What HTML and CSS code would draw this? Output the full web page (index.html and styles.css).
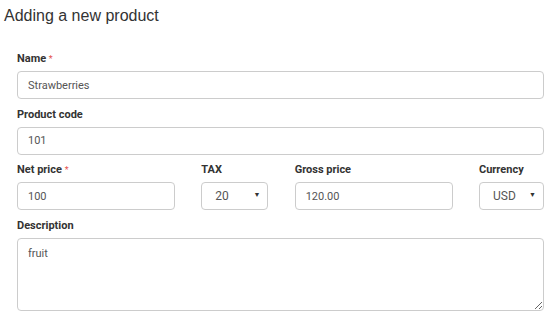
FILE: index.html
```html
<!DOCTYPE html>
<html lang="en">

<head>
    <meta charset="UTF-8">
    <meta name="viewport" content="width=device-width, initial-scale=1.0">
    <title>Adding a new product</title>
    <link rel="stylesheet" href="styles.css">
</head>

<body>
    <h1 class="page-title">Adding a new product</h1>
    <form class="product-form" id="productForm">
        <div class="field">
            <label for="name">Name <span class="req">*</span></label>
            <input type="text" id="name" value="Strawberries">
        </div>
        <div class="field">
            <label for="code">Product code</label>
            <input type="text" id="code" value="101">
        </div>
        <div class="price-row">
            <div class="field">
                <label for="netPrice">Net price <span class="req">*</span></label>
                <input type="text" id="netPrice" value="100">
            </div>
            <div class="field">
                <label for="tax">TAX</label>
                <div class="select-wrap">
                    <select id="tax">
                        <option>20</option>
                        <option>10</option>
                        <option>0</option>
                    </select>
                </div>
            </div>
            <div class="field">
                <label for="grossPrice">Gross price</label>
                <input type="text" id="grossPrice" value="120.00">
            </div>
            <div class="field">
                <label for="currency">Currency</label>
                <div class="select-wrap">
                    <select id="currency">
                        <option>USD</option>
                        <option>EUR</option>
                    </select>
                </div>
            </div>
        </div>
        <div class="field">
            <label for="description">Description</label>
            <textarea id="description">fruit</textarea>
        </div>
    </form>
</body>

</html>
```

FILE: styles.css
```css
:root {
    --text-color: #333;
    --field-text: #555;
    --input-border: #ccc;
    --req-color: #e4514d;
}

body {
    font-family: "Liberation Sans", Arial, sans-serif;
    margin: 0;
    background-color: #fff;
    color: var(--text-color);
}

.page-title {
    font-size: 16px;
    font-weight: normal;
    line-height: 18px;
    margin: 0;
    padding: 7px 0 0 4px;
}

.product-form {
    margin-top: 27px;
    padding: 0 6px 0 17px;
    font-family: Roboto, "Liberation Sans", sans-serif;
}

.field {
    margin-bottom: 8.5px;
}

label {
    display: block;
    font-size: 11px;
    font-weight: bold;
    line-height: 14px;
    margin-bottom: 5px;
}

.req {
    color: var(--req-color);
    font-weight: normal;
    font-size: 9px;
    vertical-align: top;
}

input,
select,
textarea {
    display: block;
    width: 100%;
    box-sizing: border-box;
    border: 1px solid var(--input-border);
    border-radius: 4px;
    background-color: #fff;
    color: var(--field-text);
    font-family: Roboto, "Liberation Sans", sans-serif;
    margin: 0;
}

input {
    height: 28px;
    padding: 0 10px;
    font-size: 11px;
}

textarea {
    height: 73px;
    padding: 8px 10px;
    font-size: 11px;
    resize: vertical;
}

.price-row {
    display: grid;
    grid-template-columns: 158px 67px 158px 65px;
    justify-content: space-between;
}

.select-wrap {
    position: relative;
}

.select-wrap::after {
    content: "\25BC";
    position: absolute;
    right: 8px;
    top: 9px;
    font-size: 7px;
    color: #333;
    pointer-events: none;
}

select {
    appearance: none;
    -webkit-appearance: none;
    height: 28px;
    padding: 0 0 0 13px;
    font-size: 12px;
}
```
